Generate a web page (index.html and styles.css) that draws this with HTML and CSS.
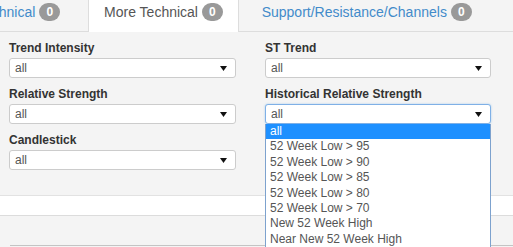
FILE: index.html
```html
<!DOCTYPE html>
<html lang="en">
<head>
    <meta charset="UTF-8">
    <meta name="viewport" content="width=device-width, initial-scale=1.0">
    <title>Screener Filters</title>
    <link rel="stylesheet" href="styles.css">
</head>
<body>
    <ul class="tabs">
        <li class="tab"><a href="#">Technical</a><span class="badge">0</span></li>
        <li class="tab active"><a href="#">More Technical</a><span class="badge">0</span></li>
        <li class="tab"><a href="#">Support/Resistance/Channels</a><span class="badge">0</span></li>
    </ul>

    <div class="filters">
        <div class="field">
            <label>Trend Intensity</label>
            <div class="select"><span>all</span><svg width="7" height="5" viewBox="0 0 7 5"><path d="M0 0H7L3.5 5Z" fill="#111"/></svg></div>
        </div>
        <div class="field">
            <label>ST Trend</label>
            <div class="select"><span>all</span><svg width="7" height="5" viewBox="0 0 7 5"><path d="M0 0H7L3.5 5Z" fill="#111"/></svg></div>
        </div>
        <div class="field">
            <label>Relative Strength</label>
            <div class="select"><span>all</span><svg width="7" height="5" viewBox="0 0 7 5"><path d="M0 0H7L3.5 5Z" fill="#111"/></svg></div>
        </div>
        <div class="field open">
            <label>Historical Relative Strength</label>
            <div class="select focus"><span>all</span><svg width="7" height="5" viewBox="0 0 7 5"><path d="M0 0H7L3.5 5Z" fill="#111"/></svg></div>
            <ul class="options">
                <li class="selected">all</li>
                <li>52 Week Low &gt; 95</li>
                <li>52 Week Low &gt; 90</li>
                <li>52 Week Low &gt; 85</li>
                <li>52 Week Low &gt; 80</li>
                <li>52 Week Low &gt; 70</li>
                <li>New 52 Week High</li>
                <li>Near New 52 Week High</li>
            </ul>
        </div>
        <div class="field">
            <label>Candlestick</label>
            <div class="select"><span>all</span><svg width="7" height="5" viewBox="0 0 7 5"><path d="M0 0H7L3.5 5Z" fill="#111"/></svg></div>
        </div>
    </div>

    <div class="band"></div>
    <div class="results"></div>
</body>
</html>
```

FILE: styles.css
```css
body {
    font-family: "Liberation Sans", Arial, sans-serif;
    background-color: #f4f4f4;
    color: #333;
    margin: 0;
    padding: 0;
    overflow: hidden;
}
.tabs {
    display: flex;
    list-style: none;
    margin: 0 0 0 -38px;
    padding: 0;
    border-bottom: 1px solid #ddd;
}
.tab {
    display: flex;
    align-items: center;
    gap: 4px;
    height: 20px;
    padding: 2px 15px 9px;
    margin-right: 8px;
    font-size: 14px;
    line-height: 20px;
    white-space: nowrap;
}
.tab a {
    color: #428bca;
    text-decoration: none;
}
.tab.active {
    background: #fff;
    border-left: 1px solid #ddd;
    border-right: 1px solid #ddd;
    margin-left: 5px;
    margin-bottom: -1px;
    padding-bottom: 10px;
}
.tab.active a {
    color: #555;
}
.badge {
    display: inline-block;
    background: #999;
    color: #fff;
    font-size: 12px;
    font-weight: bold;
    line-height: 12px;
    padding: 3px 7px;
    border-radius: 10px;
}
.filters {
    display: grid;
    grid-template-columns: 227px 226px;
    column-gap: 29px;
    row-gap: 9px;
    padding: 9px 0 25px 9px;
}
.field {
    position: relative;
}
.field label {
    display: block;
    font-size: 12px;
    font-weight: bold;
    line-height: 15px;
    margin-bottom: 2px;
    color: #333;
}
.select {
    display: flex;
    align-items: center;
    justify-content: space-between;
    box-sizing: border-box;
    height: 20px;
    padding: 0 8px 0 5px;
    background: #fff;
    border: 1px solid #ccc;
    border-radius: 3px;
    font-size: 12px;
    color: #555;
}
.select.focus {
    border-color: #7fb0e6;
    box-shadow: 0 0 2px rgba(102, 175, 233, 0.6);
}
.options {
    position: absolute;
    left: 0;
    right: 0;
    top: 100%;
    margin: 0;
    padding: 0;
    list-style: none;
    background: #fff;
    border: 1px solid #7da2ce;
    border-top: none;
    font-size: 12px;
    color: #555;
    z-index: 2;
}
.options li {
    line-height: 15.4px;
    padding-left: 4px;
    white-space: nowrap;
}
.options li.selected {
    background: #1e90ff;
    color: #fff;
}
.band {
    height: 19px;
    background: #fff;
    border-top: 1px solid #e2e2e2;
    border-bottom: 1px solid #dcdcdc;
}
.results {
    margin: 29px 0 0 10px;
    height: 20px;
    border-top: 1px solid #c4c4c4;
}
```
